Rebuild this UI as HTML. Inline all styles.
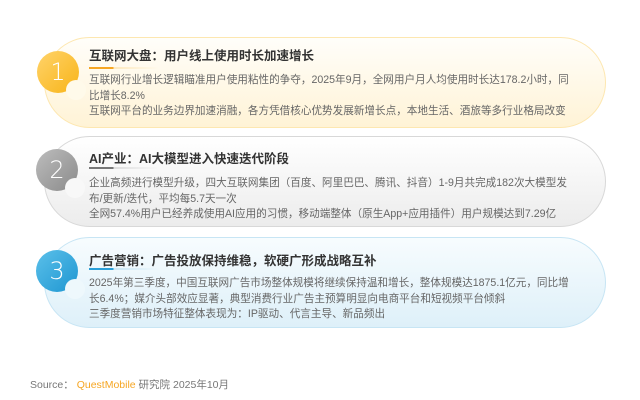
<!DOCTYPE html>
<html><head><meta charset="utf-8"><style>
*{margin:0;padding:0;box-sizing:border-box}
body{width:640px;height:400px;background:#fff;position:relative;overflow:hidden;font-family:"Liberation Sans","Noto Sans CJK SC",sans-serif;color:#555}
.card{position:absolute;left:44px;width:562px;height:91px;border-radius:46px;border:1.5px solid}
.c1{top:37px;background:linear-gradient(#fffefa,#fff3d6);border-color:#fde7b0}
.c2{top:136px;background:linear-gradient(#fff,#ececec);border-color:#d8d8d8}
.c3{top:237px;background:linear-gradient(#f7fcfe,#def0f9);border-color:#c7e5f4}
.t{position:absolute;left:89px;font-size:12.5px;font-weight:bold;color:#333;white-space:nowrap}
.u{position:absolute;left:89px;width:70px;height:2px}
.b{position:absolute;left:89px;font-size:10.6px;line-height:15.5px;color:#666;width:486px}
.circ{position:absolute;width:42px;height:42px;border-radius:50%;color:#fff;font-size:24px;font-weight:300;text-align:center;line-height:42px;font-family:"DejaVu Sans",sans-serif}
.notch{position:absolute;width:20px;height:20px;border-radius:50%;background:#fff}
.src{position:absolute;left:30px;top:377px;font-size:10.5px;color:#777}
</style></head><body>
<div class="card c1"></div>
<div class="card c2"></div>
<div class="card c3"></div>

<div class="circ" style="left:37px;top:51px;background:linear-gradient(135deg,#ffd36a,#f8b418)">1</div>
<div class="notch" style="left:66px;top:80px;background:#fffaea"></div>
<div class="circ" style="left:36px;top:149px;background:linear-gradient(135deg,#bdbdbd,#8a8a8a)">2</div>
<div class="notch" style="left:65px;top:178px;background:#f8f8f8"></div>
<div class="circ" style="left:36px;top:250px;background:linear-gradient(135deg,#5bc0ea,#1e96d1)">3</div>
<div class="notch" style="left:65px;top:279px;background:#eef8fc"></div>

<div class="t" style="top:45px">互联网大盘：用户线上使用时长加速增长</div>
<div class="u" style="top:67px;background:linear-gradient(90deg,#f6a623 35%,#fde9bd 35%,transparent)"></div>
<div class="b" style="top:73px">互联网行业增长逻辑瞄准用户使用粘性的争夺，2025年9月，全网用户月人均使用时长达178.2小时，同比增长8.2%<br>互联网平台的业务边界加速消融，各方凭借核心优势发展新增长点，本地生活、酒旅等多行业格局改变</div>

<div class="t" style="top:148px">AI产业：AI大模型进入快速迭代阶段</div>
<div class="u" style="top:167px;background:linear-gradient(90deg,#777 35%,#ddd 35%,transparent)"></div>
<div class="b" style="top:176px">企业高频进行模型升级，四大互联网集团（百度、阿里巴巴、腾讯、抖音）1-9月共完成182次大模型发布/更新/迭代，平均每5.7天一次<br>全网57.4%用户已经养成使用AI应用的习惯，移动端整体（原生App+应用插件）用户规模达到7.29亿</div>

<div class="t" style="top:250px">广告营销：广告投放保持维稳，软硬广形成战略互补</div>
<div class="u" style="top:268px;background:linear-gradient(90deg,#2a9fd8 35%,#c9e7f6 35%,transparent)"></div>
<div class="b" style="top:276px">2025年第三季度，中国互联网广告市场整体规模将继续保持温和增长，整体规模达1875.1亿元，同比增长6.4%；媒介头部效应显著，典型消费行业广告主预算明显向电商平台和短视频平台倾斜<br>三季度营销市场特征整体表现为：IP驱动、代言主导、新品频出</div>

<div class="src">Source： <span style="color:#f6a623">QuestMobile</span> 研究院 2025年10月</div>
</body></html>
